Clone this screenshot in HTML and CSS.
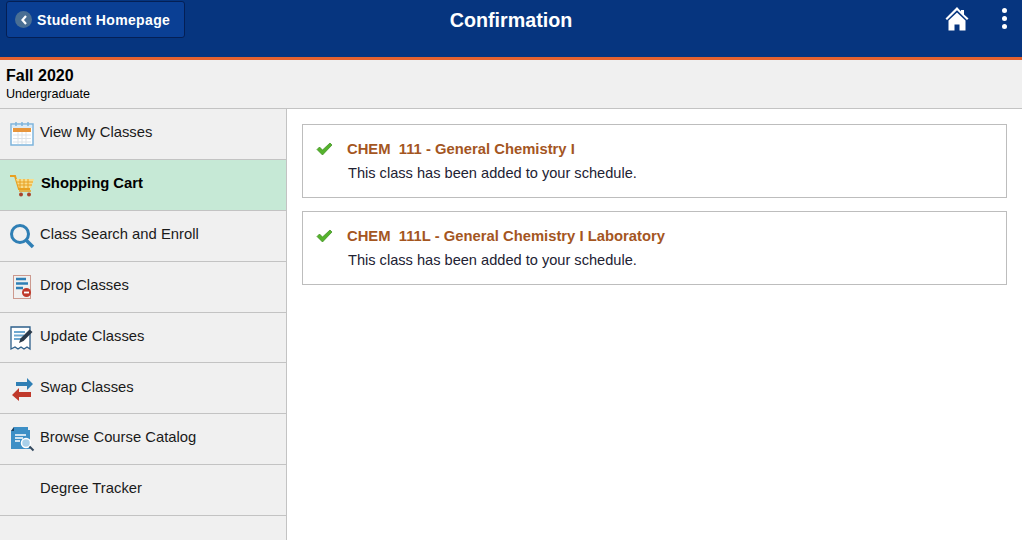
FILE: index.html
```html
<!DOCTYPE html>
<html lang="en">
<head>
    <meta charset="UTF-8">
    <title>Confirmation</title>
    <link rel="stylesheet" href="styles.css">
</head>
<body>
    <header class="banner">
        <a class="back-btn" href="#">
            <span class="back-circle">
                <svg width="8" height="10" viewBox="0 0 8 10"><path d="M6 1 2.500 5 6 9" fill="none" stroke="#fff" stroke-width="2.200"/></svg>
            </span>
            Student Homepage
        </a>
        <h1 class="page-title">Confirmation</h1>
        <div class="banner-actions">
            <svg class="home-icon" width="24" height="24" viewBox="0 0 24 24">
                <path d="M12 0 .5 11.500 2 13 12 3.200 22 13l1.500-1.500L19 7.500V3h-3v1.500z" fill="#fff"/>
                <path d="M12 5.500 3.500 13.500V23.500H9.500v-6h5v6h6V13.500z" fill="#fff"/>
            </svg>
            <div class="dots"><i></i><i></i><i></i></div>
        </div>
    </header>

    <div class="term-bar">
        <div class="term">Fall 2020</div>
        <div class="career">Undergraduate</div>
    </div>

    <div class="main">
        <nav class="side-nav">
            <a class="nav-item" href="#">
                <svg class="nav-icon" width="26" height="26" viewBox="0 0 26 26">
                    <rect x="2" y="3" width="22" height="21" fill="#fff" stroke="#7db4dc" stroke-width="1.500"/>
                    <rect x="3" y="4" width="20" height="3" fill="#dcebf6"/>
                    <rect x="4" y="7" width="18" height="4" fill="#e8963c"/>
                    <path d="M4 14h18M4 17.500h18M4 21h18M9 11v12M13 11v12M17 11v12" stroke="#dde3e8" stroke-width="1"/>
                    <path d="M7 1v4M13 1v4M19 1v4" stroke="#7db4dc" stroke-width="1.500"/>
                </svg>
                <span>View My Classes</span>
            </a>
            <a class="nav-item active" href="#">
                <svg class="nav-icon" width="26" height="26" viewBox="0 0 26 26">
                    <path d="M1 4h5l4 13h11" fill="none" stroke="#e8a020" stroke-width="2"/>
                    <path d="M7 7h18l-3 9H10z" fill="#f8dd8c"/>
                    <path d="M11 7v9M15 7v9M19 7v9M8 10h16M9 13h14" stroke="#e8a020" stroke-width="1"/>
                    <path d="M10 19h12" stroke="#e8a020" stroke-width="1.500"/>
                    <circle cx="12" cy="22.500" r="2" fill="#a8432c"/>
                    <circle cx="20" cy="22.500" r="2" fill="#a8432c"/>
                </svg>
                <span>Shopping Cart</span>
            </a>
            <a class="nav-item" href="#">
                <svg class="nav-icon" width="26" height="26" viewBox="0 0 26 26">
                    <circle cx="11" cy="11" r="8.500" fill="none" stroke="#2f7fb5" stroke-width="3"/>
                    <path d="M17 17l7 7" stroke="#2f7fb5" stroke-width="3.500"/>
                </svg>
                <span>Class Search and Enroll</span>
            </a>
            <a class="nav-item" href="#">
                <svg class="nav-icon" width="26" height="26" viewBox="0 0 26 26">
                    <rect x="4.500" y="1.500" width="17" height="23" fill="none" stroke="#a8432c" stroke-width="1" stroke-dasharray="1 1"/>
                    <path d="M7 5h10M7 9.500h12M7 14h7" stroke="#2f7fb5" stroke-width="2.500"/>
                    <circle cx="17.500" cy="18.500" r="4.500" fill="#c0392b"/>
                    <path d="M15 18.500h5" stroke="#fff" stroke-width="1.800"/>
                </svg>
                <span>Drop Classes</span>
            </a>
            <a class="nav-item" href="#">
                <svg class="nav-icon" width="26" height="26" viewBox="0 0 26 26">
                    <path d="M2 2h19v22l-3-2-3 2-3-2-3 2-3-2-4 2z" fill="#fff" stroke="#2d5f8a" stroke-width="1.300"/>
                    <path d="M5 7h11M5 10.500h10M5 14h7" stroke="#6fa8d0" stroke-width="2"/>
                    <path d="M10 18l1.500-4.500 9-9 3 2.500-9 9z" fill="#2b3a4a"/>
                </svg>
                <span>Update Classes</span>
            </a>
            <a class="nav-item" href="#">
                <svg class="nav-icon" width="26" height="26" viewBox="0 0 26 26">
                    <path d="M7 6h11V2l6 6-6 6v-4H7z" fill="#2f7fb5"/>
                    <path d="M22 16H10v-4l-7 7 7 6v-4h12z" fill="#c0392b"/>
                </svg>
                <span>Swap Classes</span>
            </a>
            <a class="nav-item" href="#">
                <svg class="nav-icon" width="26" height="26" viewBox="0 0 26 26">
                    <path d="M5 1h14v3h2v19H2V5z" fill="#3d8fc6"/>
                    <path d="M5 1v4H2z" fill="#1d3f5e"/>
                    <path d="M6 9h11M6 12h8M6 15h5" stroke="#fff" stroke-width="1.500"/>
                    <circle cx="17" cy="17" r="4.500" fill="#a9d0ea" stroke="#fff" stroke-width="1.500"/>
                    <path d="M20.500 20.500l4 4" stroke="#34495e" stroke-width="2"/>
                </svg>
                <span>Browse Course Catalog</span>
            </a>
            <a class="nav-item" href="#">
                <span class="no-icon"></span>
                <span>Degree Tracker</span>
            </a>
        </nav>

        <section class="content">
            <div class="msg-card">
                <svg class="check" width="17" height="14" viewBox="0 0 17 14"><path d="M1 7.500 3.500 5 6.500 8 14 1l2 2-9.500 10z" fill="#55b32c" stroke="#3b8a1e" stroke-width=".7"/></svg>
                <div>
                    <div class="class-name">CHEM&nbsp; 111 - General Chemistry I</div>
                    <div class="class-msg">This class has been added to your schedule.</div>
                </div>
            </div>
            <div class="msg-card">
                <svg class="check" width="17" height="14" viewBox="0 0 17 14"><path d="M1 7.500 3.500 5 6.500 8 14 1l2 2-9.500 10z" fill="#55b32c" stroke="#3b8a1e" stroke-width=".7"/></svg>
                <div>
                    <div class="class-name">CHEM&nbsp; 111L - General Chemistry I Laboratory</div>
                    <div class="class-msg">This class has been added to your schedule.</div>
                </div>
            </div>
        </section>
    </div>
</body>
</html>
```

FILE: styles.css
```css
body {
    margin: 0;
    height: 540px;
    overflow: hidden;
    font-family: "Liberation Sans", Arial, sans-serif;
    color: #000;
    background-color: #fff;
    display: flex;
    flex-direction: column;
}
a {
    text-decoration: none;
    color: inherit;
}
.banner {
    height: 57px;
    flex: none;
    background-color: #06357f;
    border-bottom: 3px solid #e4622f;
    display: flex;
    justify-content: center;
    position: relative;
}
.back-btn {
    position: absolute;
    left: 6px;
    top: 1px;
    width: 179px;
    height: 37px;
    box-sizing: border-box;
    background-color: #0a3f94;
    border: 1px solid #041f55;
    border-radius: 3px;
    display: flex;
    align-items: center;
    gap: 5px;
    padding-left: 8px;
    color: #fff;
    font-size: 14px;
    font-weight: bold;
    letter-spacing: 0.35px;
}
.back-circle {
    width: 17px;
    height: 17px;
    border-radius: 50%;
    background-color: #4a6f94;
    display: flex;
    align-items: center;
    justify-content: center;
}
.page-title {
    margin: 8px 0 0;
    color: #fff;
    font-size: 19.7px;
    line-height: 24px;
    font-weight: bold;
}
.banner-actions {
    position: absolute;
    right: 15px;
    top: 7px;
    display: flex;
    gap: 33px;
}
.dots {
    display: flex;
    flex-direction: column;
    gap: 3px;
    padding-top: 1px;
}
.dots i {
    width: 5px;
    height: 5px;
    border-radius: 50%;
    background-color: #fff;
}
.term-bar {
    flex: none;
    height: 49px;
    box-sizing: border-box;
    padding: 7px 6px 0;
    background-color: #f0f0f0;
    border-bottom: 1px solid #c3c3c3;
}
.term {
    font-size: 16px;
    font-weight: bold;
    line-height: 18px;
}
.career {
    font-size: 12.6px;
    line-height: 18px;
}
.main {
    flex: 1;
    display: flex;
    min-height: 0;
}
.side-nav {
    width: 286px;
    flex: none;
    background-color: #f0f0f0;
    border-right: 1px solid #c3c3c3;
}
.nav-item {
    height: 50.875px;
    box-sizing: border-box;
    border-bottom: 1px solid #c3c3c3;
    display: flex;
    align-items: flex-start;
    gap: 5px;
    padding: 12.2px 0 0 9px;
    font-size: 14.8px;
    line-height: 22px;
    color: #1a1a1a;
}
.nav-item.active {
    background-color: #c6e9d6;
    font-weight: bold;
    color: #000;
    gap: 6px;
}
.nav-icon {
    flex: none;
    display: block;
}
.no-icon {
    width: 26px;
    flex: none;
}
.content {
    flex: 1;
    padding: 15px 15px 0;
    display: flex;
    flex-direction: column;
    gap: 13px;
}
.msg-card {
    height: 74px;
    box-sizing: border-box;
    border: 1px solid #bdbdbd;
    display: flex;
    gap: 14px;
    padding: 15px 0 0 13px;
}
.check {
    flex: none;
    margin-top: 2px;
}
.class-name {
    font-size: 14.8px;
    font-weight: bold;
    line-height: 18px;
    color: #a4561f;
}
.class-msg {
    font-size: 14.6px;
    line-height: 18px;
    margin-top: 6px;
    margin-left: 1px;
    color: #222233;
}
```
